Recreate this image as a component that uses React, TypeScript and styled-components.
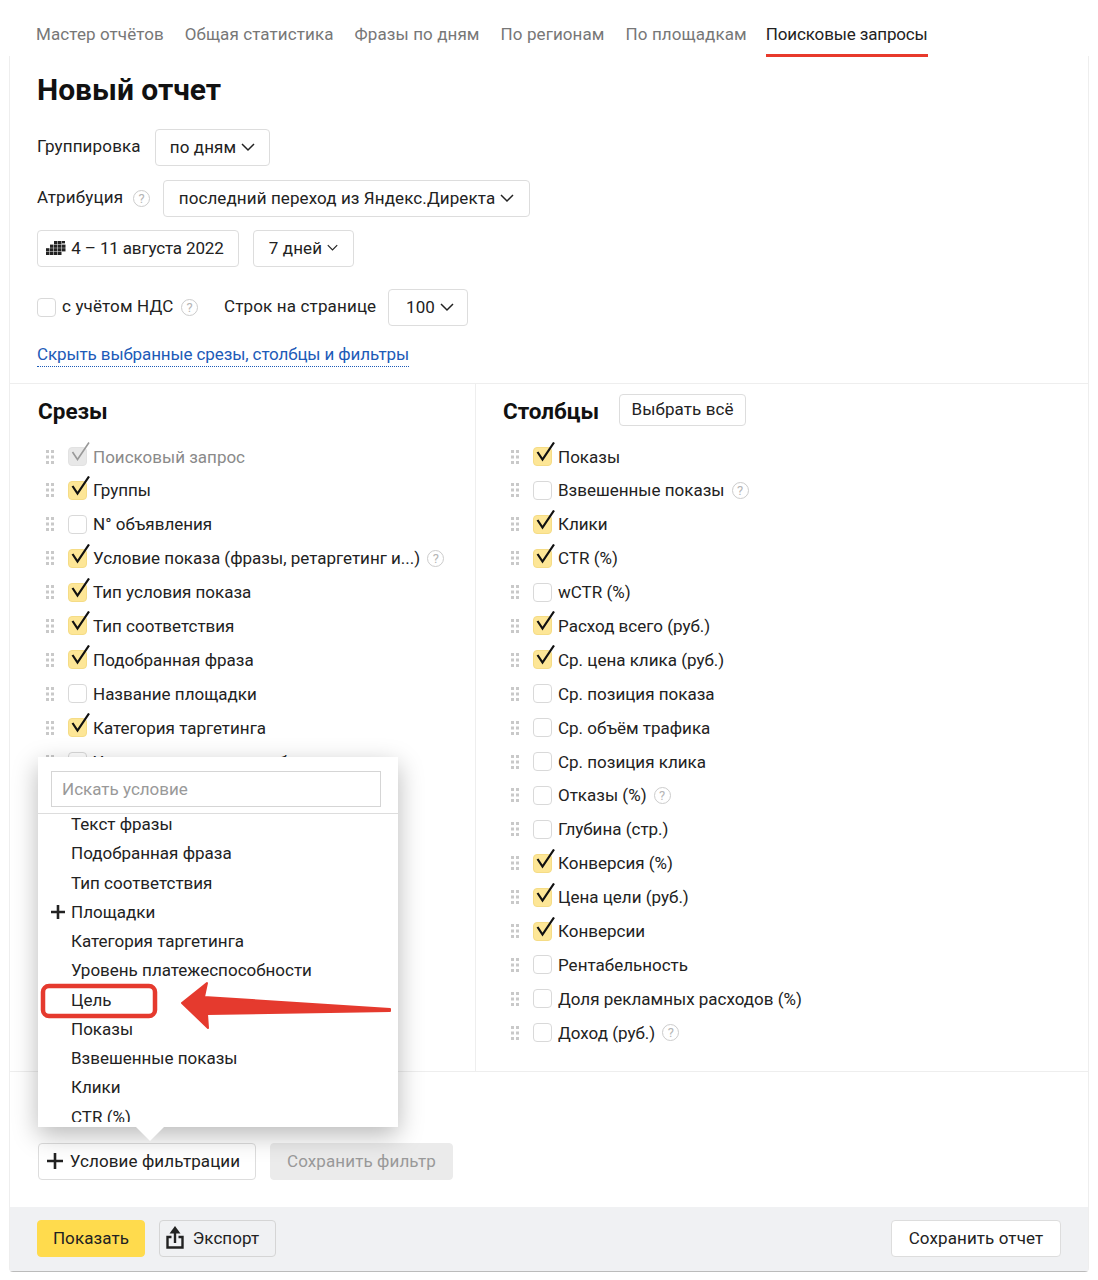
import { FC } from 'react';
import styled, { createGlobalStyle } from 'styled-components';

const GlobalStyle = createGlobalStyle`
    html, body {
        margin: 0;
        padding: 0;
        background: #fff;
    }
    body {
        font-family: Roboto, "Noto Sans", "Liberation Sans", sans-serif;
        font-size: 17px;
        color: #222;
    }
    * {
        box-sizing: border-box;
    }
`;

const Page = styled.div`
    position: relative;
    width: 1098px;
    height: 1280px;
    overflow: hidden;
`;

const Tabs = styled.div`
    display: flex;
    gap: 21px;
    height: 57px;
    padding-left: 36px;
`;

const Tab = styled.div<{ $active?: boolean }>`
    height: 57px;
    margin-left: ${p => (p.$active ? '-2px' : '0')};
    padding-top: 21px;
    line-height: 26px;
    letter-spacing: ${p => (p.$active ? '-0.15px' : '0.1px')};
    color: ${p => (p.$active ? '#222' : '#777')};
    border-bottom: 3px solid ${p => (p.$active ? '#e8392b' : 'transparent')};
`;

const Panel = styled.div`
    margin: -1px 9px 0;
    height: 1216px;
    border: 1px solid #eeeeee;
    border-top: 0;
    border-bottom: 1px solid #bbb;
    border-radius: 0 0 4px 4px;
    display: flex;
    flex-direction: column;
`;

const Form = styled.div`
    height: 328px;
    padding: 16px 0 0 27px;
    display: flex;
    flex-direction: column;
    border-bottom: 1px solid #eeeeee;
`;

const Title = styled.h1`
    margin: 0 0 21px;
    height: 36px;
    font-size: 30px;
    line-height: 36px;
    font-weight: 700;
    color: #111;
`;

const FormRow = styled.div<{ $gap?: number; $bottom?: number }>`
    display: flex;
    align-items: center;
    gap: ${p => p.$gap ?? 13}px;
    margin-bottom: ${p => p.$bottom ?? 14}px;
`;

const Label = styled.span<{ $width: number }>`
    flex: none;
    width: ${p => p.$width}px;
    padding-bottom: 2px;
    line-height: 35px;
    letter-spacing: 0.15px;
    white-space: nowrap;
`;

const Button = styled.button<{ $width: number }>`
    display: flex;
    align-items: center;
    justify-content: center;
    gap: 5px;
    flex: none;
    width: ${p => p.$width}px;
    height: 37px;
    padding: 0 0 2px;
    font: inherit;
    letter-spacing: 0.1px;
    color: #222;
    background: #fff;
    border: 1px solid #dddddd;
    border-radius: 4px;
    white-space: nowrap;
`;

const DateButton = styled(Button)`
    padding-right: 6px;
    letter-spacing: -0.15px;
`;

const PageSizeButton = styled(Button)`
    padding-left: 4px;
`;

const DisabledButton = styled(Button)`
    color: #999;
    background: #ebebeb;
    border-color: #ebebeb;
`;

const ShowButton = styled(Button)`
    background: #ffdb4d;
    border-color: #ffdb4d;
`;

const GhostButton = styled(Button)`
    padding-right: 10px;
    gap: 9px;
    background: #f0f1f3;
    border-color: #d5d5d5;
`;

const AddButton = styled(Button)`
    padding-right: 7px;
    gap: 7px;
`;

const HelpMark = styled.span`
    display: inline-flex;
    align-items: center;
    justify-content: center;
    flex: none;
    width: 17px;
    height: 17px;
    border: 1.5px solid #cccccc;
    border-radius: 50%;
    font-size: 13px;
    line-height: 1;
    color: #b5b5b5;
`;

const HelpLabel = styled.span`
    display: flex;
    align-items: center;
    gap: 7px;
`;

const VatLabel = styled(HelpLabel)`
    margin-right: 14px;
`;

const VatCheckbox = styled.span`
    display: flex;
    margin-right: -1px;
`;

const FormLink = styled.a`
    align-self: flex-start;
    margin-top: 2px;
    color: #1d5bb8;
    line-height: 24px;
    letter-spacing: -0.12px;
    border-bottom: 1px dotted #1d5bb8;
`;

const Columns = styled.div`
    display: grid;
    grid-template-columns: 466px 1fr;
    height: 688px;
    border-bottom: 1px solid #eeeeee;
`;

const Column = styled.div<{ $left: number; $bordered?: boolean }>`
    padding: 10px 0 0 ${p => p.$left}px;
    border-right: ${p => (p.$bordered ? '1px solid #eeeeee' : '0')};
    overflow: hidden;
`;

const ColumnHeader = styled.div`
    display: flex;
    align-items: center;
    gap: 20px;
    height: 32px;
    margin-bottom: 13.6px;
`;

const ColumnTitle = styled.h2`
    margin: 2px 0 0;
    font-size: 22.5px;
    font-weight: 700;
    color: #111;
`;

const SelectAll = styled(Button)`
    height: 32px;
`;

const List = styled.div`
    margin-left: 8px;
`;

const Row = styled.div`
    display: flex;
    align-items: center;
    height: 33.9px;
`;

const RowText = styled.span<{ $muted?: boolean }>`
    margin-left: 6px;
    color: ${p => (p.$muted ? '#8a8a8a' : '#222')};
    white-space: nowrap;
`;

const RowHelp = styled(HelpMark)`
    margin-left: 7px;
`;

const Handle = styled.svg`
    flex: none;
    width: 8px;
    height: 14px;
    margin-right: 14px;
`;

const Box = styled.span<{ $on?: boolean; $disabled?: boolean }>`
    position: relative;
    flex: none;
    width: 19px;
    height: 19px;
    border-radius: 4px;
    border: 1px solid ${p => (p.$disabled ? '#e2e2e2' : p.$on ? '#f5dc86' : '#d9d9d9')};
    background: ${p => (p.$disabled ? '#e8e8e8' : p.$on ? '#fde696' : '#fff')};
`;

const Tick = styled.svg`
    position: absolute;
    left: 2px;
    top: -6px;
    width: 20px;
    height: 22px;
`;

const Filters = styled.div`
    height: 135px;
    padding: 16px 0 0 28px;
    display: flex;
    flex-direction: column;
`;

const FiltersTitle = styled.div`
    height: 55px;
    font-weight: 700;
`;

const FilterButtons = styled.div`
    display: flex;
    gap: 14px;
`;

const Footer = styled.div`
    flex: 1;
    display: flex;
    justify-content: space-between;
    align-items: flex-start;
    padding: 13px 27px 0;
    background: #f0f1f3;
`;

const FooterGroup = styled.div`
    display: flex;
    gap: 14px;
`;

const Popup = styled.div`
    position: absolute;
    left: 38px;
    top: 757px;
    width: 360px;
    height: 370px;
    background: #fff;
    box-shadow: 0 8px 24px rgba(0, 0, 0, 0.28);
`;

const PopupTail = styled.div`
    position: absolute;
    left: 98px;
    top: 370px;
    width: 0;
    height: 0;
    border-left: 14px solid transparent;
    border-right: 14px solid transparent;
    border-top: 14px solid #fff;
`;

const PopupSearch = styled.div`
    padding: 14px 17px 6px 13px;
    border-bottom: 1px solid #ddd;
`;

const SearchInput = styled.div`
    height: 36px;
    padding-left: 10px;
    line-height: 34px;
    color: #999;
    border: 1px solid #d5d5d5;
`;

const PopupList = styled.div`
    height: 308px;
    overflow: hidden;
`;

const PopupItem = styled.div`
    position: relative;
    height: 29.25px;
    padding-left: 33px;
    line-height: 20px;
`;

const PopupPlus = styled.svg`
    position: absolute;
    left: 13px;
    top: 3px;
    width: 14px;
    height: 14px;
`;

const Annotation = styled.svg`
    position: absolute;
    left: 0;
    top: 0;
    width: 1098px;
    height: 1280px;
    pointer-events: none;
`;

const Chevron: FC<{ size?: number }> = ({ size = 14 }) => (
    <svg width={size} height={size} viewBox="0 0 14 14" fill="none">
        <path d="M1 4l6 6 6-6" stroke="#222" strokeWidth="1.5" />
    </svg>
);

const PlusIcon: FC = () => (
    <svg width="16" height="16" viewBox="0 0 16 16">
        <path d="M8 0v16M0 8h16" stroke="#222" strokeWidth="2.6" />
    </svg>
);

const CalendarIcon: FC = () => (
    <svg width="20" height="14" viewBox="0 0 20 14" fill="#222">
        {[8, 12].map(x => (
            <rect key={x} x={x} y="0" width="3.5" height="3.2" />
        ))}
        <rect x="16" y="0" width="3" height="2.4" />
        {[4, 8, 12, 16].map(x => (
            <rect key={x} x={x} y="3.6" width="3.5" height="3.2" />
        ))}
        {[0, 4, 8, 12, 16].map(x => (
            <rect key={x} x={x} y="7.2" width="3.5" height="3.2" />
        ))}
        {[0, 4, 8, 12].map(x => (
            <rect key={x} x={x} y="10.8" width="3.5" height="3.2" />
        ))}
    </svg>
);

const ExportIcon: FC = () => (
    <svg width="18" height="23" viewBox="0 0 18 23" fill="none" stroke="#222" strokeWidth="2.4">
        <path d="M9 17V5" />
        <path d="M9 0L3.5 7.5h11z" fill="#222" strokeWidth="0" />
        <path d="M5.5 11H1.5v10.5h15V11h-4" />
    </svg>
);

const DragHandle: FC = () => (
    <Handle viewBox="0 0 8 14" fill="#c9c9c9">
        {[0, 5.5, 11].map(y => (
            <g key={y}>
                <rect x="0" y={y} width="3" height="3" />
                <rect x="5" y={y} width="3" height="3" />
            </g>
        ))}
    </Handle>
);

type Item = { text: string; on?: boolean; help?: boolean; disabled?: boolean };

const Checkbox: FC<{ on?: boolean; disabled?: boolean }> = ({ on, disabled }) => (
    <Box $on={on} $disabled={disabled}>
        {(on || disabled) && (
            <Tick viewBox="0 0 20 22" fill="none">
                <path
                    d="M1.5 10l5 7.5L18 .5"
                    stroke={disabled ? '#999' : '#111'}
                    strokeWidth={disabled ? 1.6 : 2.2}
                />
            </Tick>
        )}
    </Box>
);

const ReportRow: FC<{ item: Item }> = ({ item }) => (
    <Row>
        <DragHandle />
        <Checkbox on={item.on} disabled={item.disabled} />
        <RowText $muted={item.disabled}>{item.text}</RowText>
        {item.help && <RowHelp>?</RowHelp>}
    </Row>
);

const slices: Item[] = [
    { text: 'Поисковый запрос', disabled: true },
    { text: 'Группы', on: true },
    { text: 'N° объявления' },
    { text: 'Условие показа (фразы, ретаргетинг и...)', on: true, help: true },
    { text: 'Тип условия показа', on: true },
    { text: 'Тип соответствия', on: true },
    { text: 'Подобранная фраза', on: true },
    { text: 'Название площадки' },
    { text: 'Категория таргетинга', on: true },
    { text: 'Уровень платежеспособности' },
];

const metrics: Item[] = [
    { text: 'Показы', on: true },
    { text: 'Взвешенные показы', help: true },
    { text: 'Клики', on: true },
    { text: 'CTR (%)', on: true },
    { text: 'wCTR (%)' },
    { text: 'Расход всего (руб.)', on: true },
    { text: 'Ср. цена клика (руб.)', on: true },
    { text: 'Ср. позиция показа' },
    { text: 'Ср. объём трафика' },
    { text: 'Ср. позиция клика' },
    { text: 'Отказы (%)', help: true },
    { text: 'Глубина (стр.)' },
    { text: 'Конверсия (%)', on: true },
    { text: 'Цена цели (руб.)', on: true },
    { text: 'Конверсии', on: true },
    { text: 'Рентабельность' },
    { text: 'Доля рекламных расходов (%)' },
    { text: 'Доход (руб.)', help: true },
];

const conditions = [
    'Текст фразы',
    'Подобранная фраза',
    'Тип соответствия',
    'Площадки',
    'Категория таргетинга',
    'Уровень платежеспособности',
    'Цель',
    'Показы',
    'Взвешенные показы',
    'Клики',
    'CTR (%)',
];

const tabs = [
    'Мастер отчётов',
    'Общая статистика',
    'Фразы по дням',
    'По регионам',
    'По площадкам',
];

export default function App() {
    return (
        <Page>
            <GlobalStyle />
            <Tabs>
                {tabs.map(tab => (
                    <Tab key={tab}>{tab}</Tab>
                ))}
                <Tab $active>Поисковые запросы</Tab>
            </Tabs>
            <Panel>
                <Form>
                    <Title>Новый отчет</Title>
                    <FormRow>
                        <Label $width={105}>Группировка</Label>
                        <Button $width={115}>
                            по дням <Chevron />
                        </Button>
                    </FormRow>
                    <FormRow $bottom={13}>
                        <HelpLabel>
                            <Label $width={89}>Атрибуция</Label>
                            <HelpMark>?</HelpMark>
                        </HelpLabel>
                        <Button $width={367}>
                            последний переход из Яндекс.Директа <Chevron />
                        </Button>
                    </FormRow>
                    <FormRow $gap={14} $bottom={22}>
                        <DateButton $width={202}>
                            <CalendarIcon /> 4 – 11 августа 2022
                        </DateButton>
                        <Button $width={101}>
                            7 дней <Chevron size={11} />
                        </Button>
                    </FormRow>
                    <FormRow $gap={12}>
                        <VatLabel>
                            <VatCheckbox>
                                <Checkbox />
                            </VatCheckbox>
                            <Label $width={112}>с учётом НДС</Label>
                            <HelpMark>?</HelpMark>
                        </VatLabel>
                        <Label $width={152}>Строк на странице</Label>
                        <PageSizeButton $width={80}>
                            100 <Chevron />
                        </PageSizeButton>
                    </FormRow>
                    <FormLink>Скрыть выбранные срезы, столбцы и фильтры</FormLink>
                </Form>
                <Columns>
                    <Column $left={28} $bordered>
                        <ColumnHeader>
                            <ColumnTitle>Срезы</ColumnTitle>
                        </ColumnHeader>
                        <List>
                            {slices.map(item => (
                                <ReportRow key={item.text} item={item} />
                            ))}
                        </List>
                    </Column>
                    <Column $left={27}>
                        <ColumnHeader>
                            <ColumnTitle>Столбцы</ColumnTitle>
                            <SelectAll $width={127}>Выбрать всё</SelectAll>
                        </ColumnHeader>
                        <List>
                            {metrics.map(item => (
                                <ReportRow key={item.text} item={item} />
                            ))}
                        </List>
                    </Column>
                </Columns>
                <Filters>
                    <FiltersTitle>Фильтры</FiltersTitle>
                    <FilterButtons>
                        <AddButton $width={218}>
                            <PlusIcon /> Условие фильтрации
                        </AddButton>
                        <DisabledButton $width={183}>Сохранить фильтр</DisabledButton>
                    </FilterButtons>
                </Filters>
                <Footer>
                    <FooterGroup>
                        <ShowButton $width={108}>Показать</ShowButton>
                        <GhostButton $width={117}>
                            <ExportIcon /> Экспорт
                        </GhostButton>
                    </FooterGroup>
                    <Button $width={170}>Сохранить отчет</Button>
                </Footer>
            </Panel>
            <Popup>
                <PopupSearch>
                    <SearchInput>Искать условие</SearchInput>
                </PopupSearch>
                <PopupList>
                    {conditions.map(text => (
                        <PopupItem key={text}>
                            {text === 'Площадки' && (
                                <PopupPlus viewBox="0 0 14 14">
                                    <path d="M7 0v14M0 7h14" stroke="#222" strokeWidth="2.6" />
                                </PopupPlus>
                            )}
                            {text}
                        </PopupItem>
                    ))}
                </PopupList>
                <PopupTail />
            </Popup>
            <Annotation viewBox="0 0 1098 1280" fill="none">
                <rect x="43" y="986" width="112" height="30" rx="6" stroke="#e53a2e" strokeWidth="4.5" />
                <path
                    d="M182 1003L207 983L204 997L390 1009V1011L207 1014L208 1028Z"
                    fill="#e53a2e"
                    stroke="#e53a2e"
                    strokeWidth="2"
                    strokeLinejoin="round"
                />
            </Annotation>
        </Page>
    );
}
